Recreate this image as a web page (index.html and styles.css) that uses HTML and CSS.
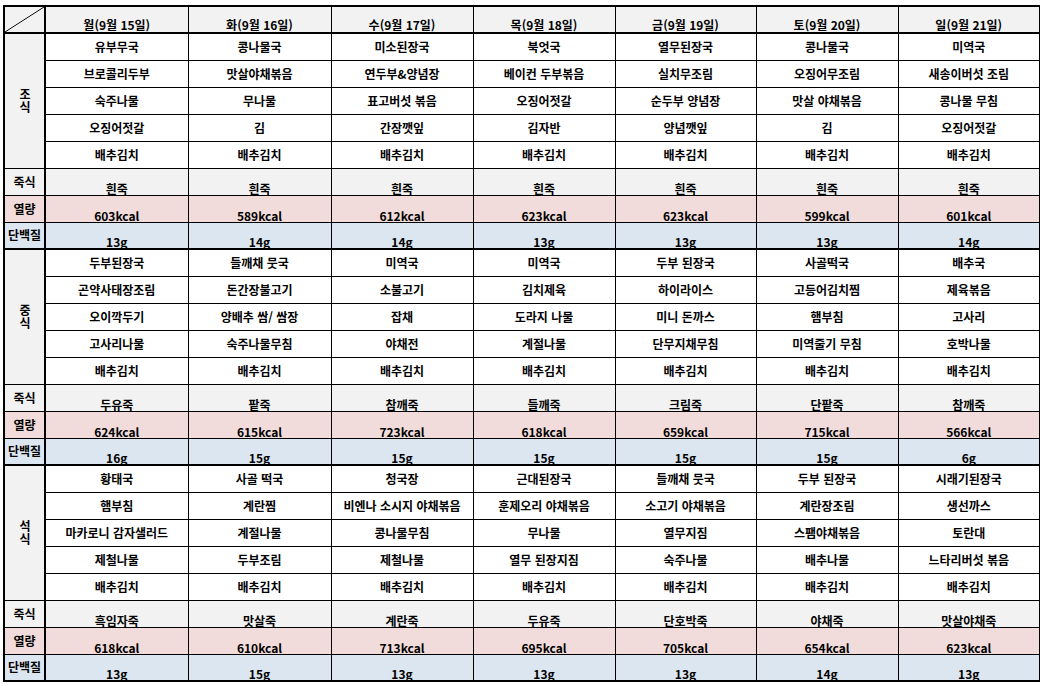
FILE: index.html
```html
<!DOCTYPE html>
<html lang="ko">
<head>
<meta charset="utf-8">
<title>주간 식단표</title>
<link rel="stylesheet" href="styles.css">
</head>
<body>
<div class="sheet">
<table class="menu">
  <colgroup>
    <col class="c-label">
    <col class="c-day1"><col class="c-day2"><col class="c-day3"><col class="c-day4"><col class="c-day5"><col class="c-day6"><col class="c-day7">
  </colgroup>
  <tr class="head">
    <th class="corner"></th>
    <th>월(9월 15일)</th><th>화(9월 16일)</th><th>수(9월 17일)</th><th>목(9월 18일)</th><th>금(9월 19일)</th><th>토(9월 20일)</th><th>일(9월 21일)</th>
  </tr>

  <!-- 조식 -->
  <tr>
    <td class="label meal" rowspan="5"><span class="vert">조식</span></td>
    <td>유부무국</td><td>콩나물국</td><td>미소된장국</td><td>북엇국</td><td>열무된장국</td><td>콩나물국</td><td>미역국</td>
  </tr>
  <tr><td>브로콜리두부</td><td>맛살야채볶음</td><td>연두부&amp;양념장</td><td>베이컨 두부볶음</td><td>실치무조림</td><td>오징어무조림</td><td>새송이버섯 조림</td></tr>
  <tr><td>숙주나물</td><td>무나물</td><td>표고버섯 볶음</td><td>오징어젓갈</td><td>순두부 양념장</td><td>맛살 야채볶음</td><td>콩나물 무침</td></tr>
  <tr><td>오징어젓갈</td><td>김</td><td>간장깻잎</td><td>김자반</td><td>양념깻잎</td><td>김</td><td>오징어젓갈</td></tr>
  <tr><td>배추김치</td><td>배추김치</td><td>배추김치</td><td>배추김치</td><td>배추김치</td><td>배추김치</td><td>배추김치</td></tr>
  <tr class="porridge"><td class="label">죽식</td><td>흰죽</td><td>흰죽</td><td>흰죽</td><td>흰죽</td><td>흰죽</td><td>흰죽</td><td>흰죽</td></tr>
  <tr class="kcal"><td class="label">열량</td><td>603kcal</td><td>589kcal</td><td>612kcal</td><td>623kcal</td><td>623kcal</td><td>599kcal</td><td>601kcal</td></tr>
  <tr class="protein end"><td class="label">단백질</td><td>13g</td><td>14g</td><td>14g</td><td>13g</td><td>13g</td><td>13g</td><td>14g</td></tr>

  <!-- 중식 -->
  <tr>
    <td class="label meal" rowspan="5"><span class="vert">중식</span></td>
    <td>두부된장국</td><td>들깨채 뭇국</td><td>미역국</td><td>미역국</td><td>두부 된장국</td><td>사골떡국</td><td>배추국</td>
  </tr>
  <tr><td>곤약사태장조림</td><td>돈간장불고기</td><td>소불고기</td><td>김치제육</td><td>하이라이스</td><td>고등어김치찜</td><td>제육볶음</td></tr>
  <tr><td>오이깍두기</td><td>양배추 쌈/ 쌈장</td><td>잡채</td><td>도라지 나물</td><td>미니 돈까스</td><td>햄부침</td><td>고사리</td></tr>
  <tr><td>고사리나물</td><td>숙주나물무침</td><td>야채전</td><td>계절나물</td><td>단무지채무침</td><td>미역줄기 무침</td><td>호박나물</td></tr>
  <tr><td>배추김치</td><td>배추김치</td><td>배추김치</td><td>배추김치</td><td>배추김치</td><td>배추김치</td><td>배추김치</td></tr>
  <tr class="porridge"><td class="label">죽식</td><td>두유죽</td><td>팥죽</td><td>참깨죽</td><td>들깨죽</td><td>크림죽</td><td>단팥죽</td><td>참깨죽</td></tr>
  <tr class="kcal"><td class="label">열량</td><td>624kcal</td><td>615kcal</td><td>723kcal</td><td>618kcal</td><td>659kcal</td><td>715kcal</td><td>566kcal</td></tr>
  <tr class="protein end"><td class="label">단백질</td><td>16g</td><td>15g</td><td>15g</td><td>15g</td><td>15g</td><td>15g</td><td>6g</td></tr>

  <!-- 석식 -->
  <tr>
    <td class="label meal" rowspan="5"><span class="vert">석식</span></td>
    <td>황태국</td><td>사골 떡국</td><td>청국장</td><td>근대된장국</td><td>들깨채 뭇국</td><td>두부 된장국</td><td>시래기된장국</td>
  </tr>
  <tr><td>햄부침</td><td>계란찜</td><td>비엔나 소시지 야채볶음</td><td>훈제오리 야채볶음</td><td>소고기 야채볶음</td><td>계란장조림</td><td>생선까스</td></tr>
  <tr><td>마카로니 감자샐러드</td><td>계절나물</td><td>콩나물무침</td><td>무나물</td><td>열무지짐</td><td>스팸야채볶음</td><td>토란대</td></tr>
  <tr><td>제철나물</td><td>두부조림</td><td>제철나물</td><td>열무 된장지짐</td><td>숙주나물</td><td>배추나물</td><td>느타리버섯 볶음</td></tr>
  <tr><td>배추김치</td><td>배추김치</td><td>배추김치</td><td>배추김치</td><td>배추김치</td><td>배추김치</td><td>배추김치</td></tr>
  <tr class="porridge"><td class="label">죽식</td><td>흑임자죽</td><td>맛살죽</td><td>계란죽</td><td>두유죽</td><td>단호박죽</td><td>야채죽</td><td>맛살야채죽</td></tr>
  <tr class="kcal"><td class="label">열량</td><td>618kcal</td><td>610kcal</td><td>713kcal</td><td>695kcal</td><td>705kcal</td><td>654kcal</td><td>623kcal</td></tr>
  <tr class="protein end"><td class="label">단백질</td><td>13g</td><td>15g</td><td>13g</td><td>13g</td><td>13g</td><td>14g</td><td>13g</td></tr>
</table>
</div>
</body>
</html>
```

FILE: styles.css
```css
html, body {
  margin: 0;
  padding: 0;
  background: #ffffff;
}

body {
  font-family: "Noto Sans CJK KR", "Noto Sans", sans-serif;
  color: #000;
}

.sheet {
  padding: 5px 0 0 3px;
}

.menu {
  border-collapse: collapse;
  table-layout: fixed;
  width: 1036px;
  border: 2px solid #000;
}

.c-label { width: 41px; }
.c-day1 { width: 143px; }
.c-day2 { width: 143px; }
.c-day3 { width: 142px; }
.c-day4 { width: 142px; }
.c-day5 { width: 141px; }
.c-day6 { width: 142px; }
.c-day7 { width: 142px; }

.menu tr {
  height: 27px;
}

.menu th,
.menu td {
  border: 1px solid #000;
  padding: 0;
  text-align: center;
  vertical-align: middle;
  font-size: 12px;
  font-weight: 700;
  line-height: 14px;
  white-space: nowrap;
  overflow: hidden;
}

.head th {
  background: #f2f2f2;
  border-bottom: 2px solid #000;
  vertical-align: bottom;
  line-height: 13px;
  padding-bottom: 1px;
  font-weight: 700;
}

.head .corner {
  border-right: 2px solid #000;
  background:
    linear-gradient(to bottom right,
      transparent calc(50% - 0.8px),
      #000 50%,
      transparent calc(50% + 0.8px)),
    #f2f2f2;
}

.menu .label {
  background: #f2f2f2;
  border-right: 2px solid #000;
  vertical-align: middle;
  line-height: 14px;
  padding: 0;
}

.vert {
  display: inline-block;
  writing-mode: vertical-rl;
  text-orientation: upright;
  letter-spacing: 1px;
  line-height: 14px;
  padding-top: 2px;
}

.porridge td {
  background: #f2f2f2;
  vertical-align: bottom;
  line-height: 12px;
}

.kcal td,
.kcal .label {
  background: #f2dcdb;
}

.kcal td {
  vertical-align: bottom;
  line-height: 12px;
}

.protein td,
.protein .label {
  background: #dce6f1;
}

.protein td {
  vertical-align: bottom;
  line-height: 12px;
}

.menu tr .label {
  vertical-align: middle;
  line-height: 14px;
}

.end td {
  border-bottom: 2px solid #000;
}
```
